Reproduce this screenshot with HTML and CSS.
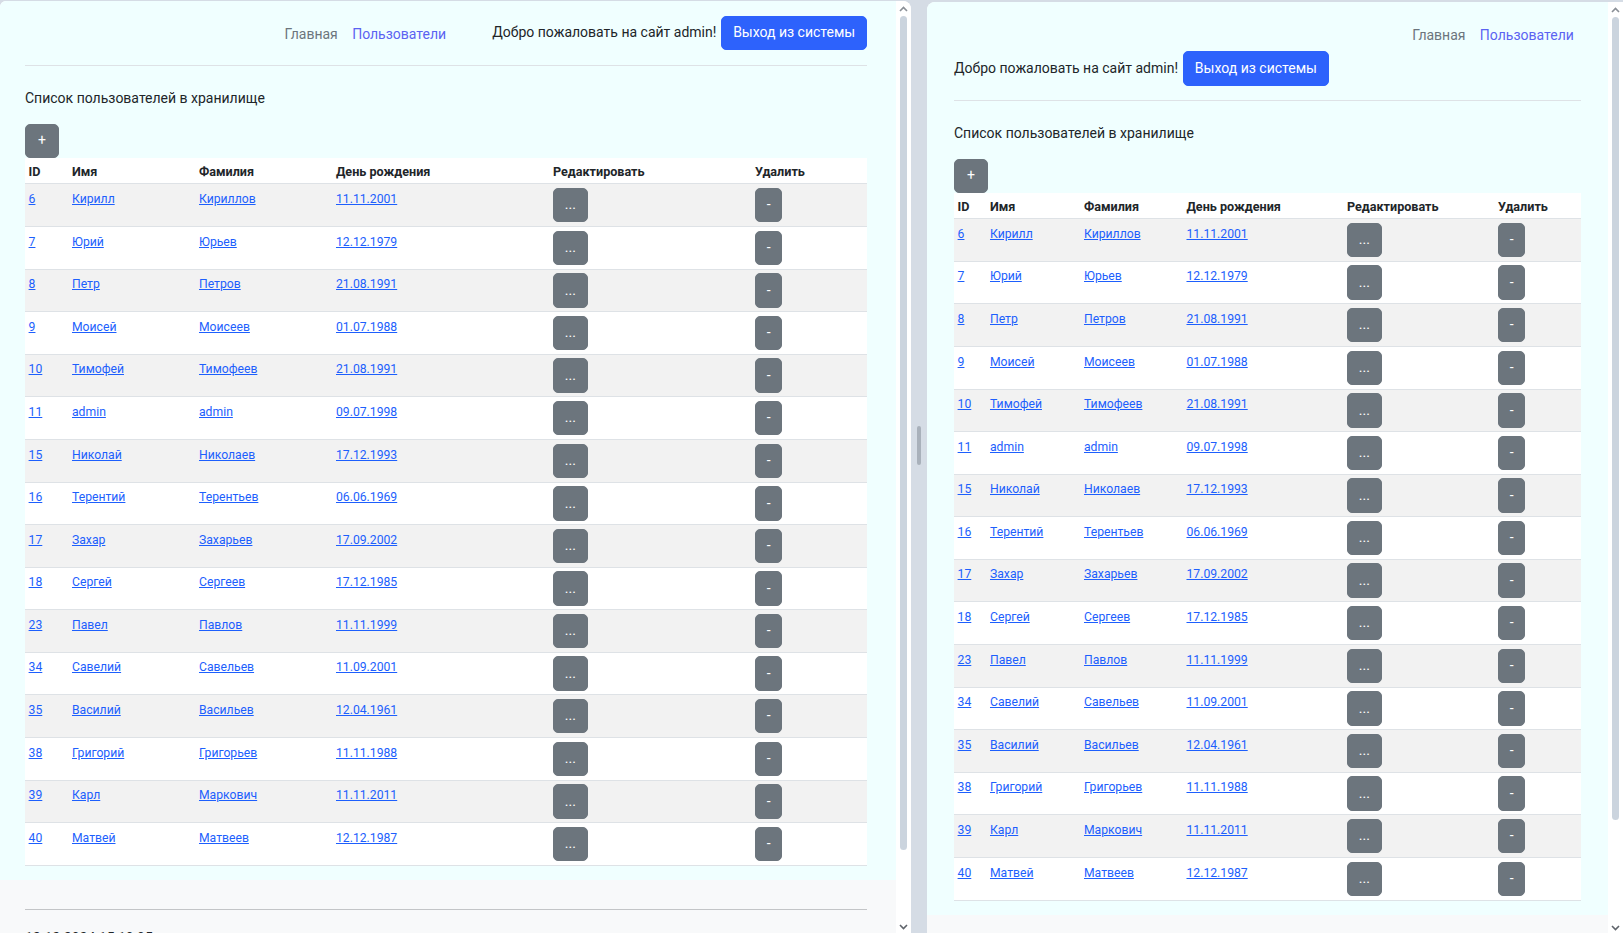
FILE: index.html
```html
<!DOCTYPE html>
<html lang="ru">
<head>
<meta charset="utf-8">
<title>Пользователи</title>
<link rel="stylesheet" href="styles.css">
</head>
<body>
<div class="workspace">
  <section class="pane pane-left">
    <div class="viewport">
      <div class="page">
        <div class="container">
          <header class="hdr hdr-wide">
            <nav class="nav">
              <a class="nav-link muted" href="#">Главная</a>
              <a class="nav-link current" href="#">Пользователи</a>
            </nav>
            <div class="welcome">
              <span>Добро пожаловать на сайт admin!</span>
              <button class="btn btn-primary">Выход из системы</button>
            </div>
          </header>
          <p class="caption">Список пользователей в хранилище</p>
          <button class="btn btn-secondary btn-add">+</button>
          <table class="table table-wide">
            <colgroup><col class="c-id"><col class="c-name"><col class="c-last"><col class="c-bd"><col class="c-edit"><col class="c-del"></colgroup>
            <thead><tr><th>ID</th><th>Имя</th><th>Фамилия</th><th>День рождения</th><th>Редактировать</th><th>Удалить</th></tr></thead>
            <tbody>
              <tr><td><a href="#">6</a></td><td><a href="#">Кирилл</a></td><td><a href="#">Кириллов</a></td><td><a href="#">11.11.2001</a></td><td><button class="btn btn-secondary">...</button></td><td><button class="btn btn-secondary">-</button></td></tr>
              <tr><td><a href="#">7</a></td><td><a href="#">Юрий</a></td><td><a href="#">Юрьев</a></td><td><a href="#">12.12.1979</a></td><td><button class="btn btn-secondary">...</button></td><td><button class="btn btn-secondary">-</button></td></tr>
              <tr><td><a href="#">8</a></td><td><a href="#">Петр</a></td><td><a href="#">Петров</a></td><td><a href="#">21.08.1991</a></td><td><button class="btn btn-secondary">...</button></td><td><button class="btn btn-secondary">-</button></td></tr>
              <tr><td><a href="#">9</a></td><td><a href="#">Моисей</a></td><td><a href="#">Моисеев</a></td><td><a href="#">01.07.1988</a></td><td><button class="btn btn-secondary">...</button></td><td><button class="btn btn-secondary">-</button></td></tr>
              <tr><td><a href="#">10</a></td><td><a href="#">Тимофей</a></td><td><a href="#">Тимофеев</a></td><td><a href="#">21.08.1991</a></td><td><button class="btn btn-secondary">...</button></td><td><button class="btn btn-secondary">-</button></td></tr>
              <tr><td><a href="#">11</a></td><td><a href="#">admin</a></td><td><a href="#">admin</a></td><td><a href="#">09.07.1998</a></td><td><button class="btn btn-secondary">...</button></td><td><button class="btn btn-secondary">-</button></td></tr>
              <tr><td><a href="#">15</a></td><td><a href="#">Николай</a></td><td><a href="#">Николаев</a></td><td><a href="#">17.12.1993</a></td><td><button class="btn btn-secondary">...</button></td><td><button class="btn btn-secondary">-</button></td></tr>
              <tr><td><a href="#">16</a></td><td><a href="#">Терентий</a></td><td><a href="#">Терентьев</a></td><td><a href="#">06.06.1969</a></td><td><button class="btn btn-secondary">...</button></td><td><button class="btn btn-secondary">-</button></td></tr>
              <tr><td><a href="#">17</a></td><td><a href="#">Захар</a></td><td><a href="#">Захарьев</a></td><td><a href="#">17.09.2002</a></td><td><button class="btn btn-secondary">...</button></td><td><button class="btn btn-secondary">-</button></td></tr>
              <tr><td><a href="#">18</a></td><td><a href="#">Сергей</a></td><td><a href="#">Сергеев</a></td><td><a href="#">17.12.1985</a></td><td><button class="btn btn-secondary">...</button></td><td><button class="btn btn-secondary">-</button></td></tr>
              <tr><td><a href="#">23</a></td><td><a href="#">Павел</a></td><td><a href="#">Павлов</a></td><td><a href="#">11.11.1999</a></td><td><button class="btn btn-secondary">...</button></td><td><button class="btn btn-secondary">-</button></td></tr>
              <tr><td><a href="#">34</a></td><td><a href="#">Савелий</a></td><td><a href="#">Савельев</a></td><td><a href="#">11.09.2001</a></td><td><button class="btn btn-secondary">...</button></td><td><button class="btn btn-secondary">-</button></td></tr>
              <tr><td><a href="#">35</a></td><td><a href="#">Василий</a></td><td><a href="#">Васильев</a></td><td><a href="#">12.04.1961</a></td><td><button class="btn btn-secondary">...</button></td><td><button class="btn btn-secondary">-</button></td></tr>
              <tr><td><a href="#">38</a></td><td><a href="#">Григорий</a></td><td><a href="#">Григорьев</a></td><td><a href="#">11.11.1988</a></td><td><button class="btn btn-secondary">...</button></td><td><button class="btn btn-secondary">-</button></td></tr>
              <tr><td><a href="#">39</a></td><td><a href="#">Карл</a></td><td><a href="#">Маркович</a></td><td><a href="#">11.11.2011</a></td><td><button class="btn btn-secondary">...</button></td><td><button class="btn btn-secondary">-</button></td></tr>
              <tr><td><a href="#">40</a></td><td><a href="#">Матвей</a></td><td><a href="#">Матвеев</a></td><td><a href="#">12.12.1987</a></td><td><button class="btn btn-secondary">...</button></td><td><button class="btn btn-secondary">-</button></td></tr>
            </tbody>
          </table>
        </div>
        <footer class="footer">
          <div class="container">
            <hr class="rule">
            <div class="stamp">12.12.2024 15:10:05</div>
          </div>
        </footer>
      </div>
    </div>
    <div class="scrollbar">
      <svg class="arrow" width="9" height="6" viewBox="0 0 9 6"><polyline points="1,5 4.5,1.5 8,5" fill="none" stroke="#8a8f96" stroke-width="1.6"/></svg>
      <div class="track"><div class="thumb thumb-left"></div></div>
      <svg class="arrow" width="9" height="6" viewBox="0 0 9 6"><polyline points="1,1 4.5,4.5 8,1" fill="none" stroke="#5f646b" stroke-width="1.6"/></svg>
    </div>
  </section>

  <div class="splitter"><div class="grip"></div></div>

  <section class="pane pane-right">
    <div class="viewport">
      <div class="page">
        <div class="container">
          <header class="hdr hdr-narrow">
            <nav class="nav">
              <a class="nav-link muted" href="#">Главная</a>
              <a class="nav-link current" href="#">Пользователи</a>
            </nav>
            <div class="welcome">
              <span>Добро пожаловать на сайт admin!</span>
              <button class="btn btn-primary">Выход из системы</button>
            </div>
          </header>
          <p class="caption">Список пользователей в хранилище</p>
          <button class="btn btn-secondary btn-add">+</button>
          <table class="table table-narrow">
            <colgroup><col class="c-id"><col class="c-name"><col class="c-last"><col class="c-bd"><col class="c-edit"><col class="c-del"></colgroup>
            <thead><tr><th>ID</th><th>Имя</th><th>Фамилия</th><th>День рождения</th><th>Редактировать</th><th>Удалить</th></tr></thead>
            <tbody>
              <tr><td><a href="#">6</a></td><td><a href="#">Кирилл</a></td><td><a href="#">Кириллов</a></td><td><a href="#">11.11.2001</a></td><td><button class="btn btn-secondary">...</button></td><td><button class="btn btn-secondary">-</button></td></tr>
              <tr><td><a href="#">7</a></td><td><a href="#">Юрий</a></td><td><a href="#">Юрьев</a></td><td><a href="#">12.12.1979</a></td><td><button class="btn btn-secondary">...</button></td><td><button class="btn btn-secondary">-</button></td></tr>
              <tr><td><a href="#">8</a></td><td><a href="#">Петр</a></td><td><a href="#">Петров</a></td><td><a href="#">21.08.1991</a></td><td><button class="btn btn-secondary">...</button></td><td><button class="btn btn-secondary">-</button></td></tr>
              <tr><td><a href="#">9</a></td><td><a href="#">Моисей</a></td><td><a href="#">Моисеев</a></td><td><a href="#">01.07.1988</a></td><td><button class="btn btn-secondary">...</button></td><td><button class="btn btn-secondary">-</button></td></tr>
              <tr><td><a href="#">10</a></td><td><a href="#">Тимофей</a></td><td><a href="#">Тимофеев</a></td><td><a href="#">21.08.1991</a></td><td><button class="btn btn-secondary">...</button></td><td><button class="btn btn-secondary">-</button></td></tr>
              <tr><td><a href="#">11</a></td><td><a href="#">admin</a></td><td><a href="#">admin</a></td><td><a href="#">09.07.1998</a></td><td><button class="btn btn-secondary">...</button></td><td><button class="btn btn-secondary">-</button></td></tr>
              <tr><td><a href="#">15</a></td><td><a href="#">Николай</a></td><td><a href="#">Николаев</a></td><td><a href="#">17.12.1993</a></td><td><button class="btn btn-secondary">...</button></td><td><button class="btn btn-secondary">-</button></td></tr>
              <tr><td><a href="#">16</a></td><td><a href="#">Терентий</a></td><td><a href="#">Терентьев</a></td><td><a href="#">06.06.1969</a></td><td><button class="btn btn-secondary">...</button></td><td><button class="btn btn-secondary">-</button></td></tr>
              <tr><td><a href="#">17</a></td><td><a href="#">Захар</a></td><td><a href="#">Захарьев</a></td><td><a href="#">17.09.2002</a></td><td><button class="btn btn-secondary">...</button></td><td><button class="btn btn-secondary">-</button></td></tr>
              <tr><td><a href="#">18</a></td><td><a href="#">Сергей</a></td><td><a href="#">Сергеев</a></td><td><a href="#">17.12.1985</a></td><td><button class="btn btn-secondary">...</button></td><td><button class="btn btn-secondary">-</button></td></tr>
              <tr><td><a href="#">23</a></td><td><a href="#">Павел</a></td><td><a href="#">Павлов</a></td><td><a href="#">11.11.1999</a></td><td><button class="btn btn-secondary">...</button></td><td><button class="btn btn-secondary">-</button></td></tr>
              <tr><td><a href="#">34</a></td><td><a href="#">Савелий</a></td><td><a href="#">Савельев</a></td><td><a href="#">11.09.2001</a></td><td><button class="btn btn-secondary">...</button></td><td><button class="btn btn-secondary">-</button></td></tr>
              <tr><td><a href="#">35</a></td><td><a href="#">Василий</a></td><td><a href="#">Васильев</a></td><td><a href="#">12.04.1961</a></td><td><button class="btn btn-secondary">...</button></td><td><button class="btn btn-secondary">-</button></td></tr>
              <tr><td><a href="#">38</a></td><td><a href="#">Григорий</a></td><td><a href="#">Григорьев</a></td><td><a href="#">11.11.1988</a></td><td><button class="btn btn-secondary">...</button></td><td><button class="btn btn-secondary">-</button></td></tr>
              <tr><td><a href="#">39</a></td><td><a href="#">Карл</a></td><td><a href="#">Маркович</a></td><td><a href="#">11.11.2011</a></td><td><button class="btn btn-secondary">...</button></td><td><button class="btn btn-secondary">-</button></td></tr>
              <tr><td><a href="#">40</a></td><td><a href="#">Матвей</a></td><td><a href="#">Матвеев</a></td><td><a href="#">12.12.1987</a></td><td><button class="btn btn-secondary">...</button></td><td><button class="btn btn-secondary">-</button></td></tr>
            </tbody>
          </table>
        </div>
        <footer class="footer">
          <div class="container">
            <hr class="rule">
            <div class="stamp">12.12.2024 15:10:05</div>
          </div>
        </footer>
      </div>
    </div>
    <div class="scrollbar">
      <svg class="arrow" width="9" height="6" viewBox="0 0 9 6"><polyline points="1,5 4.5,1.5 8,5" fill="none" stroke="#8a8f96" stroke-width="1.6"/></svg>
      <div class="track"><div class="thumb thumb-right"></div></div>
      <svg class="arrow" width="9" height="6" viewBox="0 0 9 6"><polyline points="1,1 4.5,4.5 8,1" fill="none" stroke="#5f646b" stroke-width="1.6"/></svg>
    </div>
  </section>
</div>
</body>
</html>
```

FILE: styles.css
```css
* { box-sizing: border-box; }

html, body {
  margin: 0;
  height: 933px;
  overflow: hidden;
}

body {
  background: #d5dce5;
  font-family: Roboto, "Noto Sans", "DejaVu Sans", sans-serif;
  font-size: 14px;
  line-height: 21.6px;
  color: #212529;
}

.workspace {
  display: flex;
  align-items: flex-start;
  height: 933px;
}

.pane {
  display: flex;
  height: 940px;
  background: #ffffff;
  overflow: hidden;
}

.pane-left {
  width: 911px;
  margin-top: 1px;
  border-radius: 6px 8px 8px 0;
}

.pane-right {
  flex: 1;
  margin-top: 2px;
  border-radius: 8px 0 0 8px;
}

.viewport {
  flex: 1;
  overflow: hidden;
  background: #f8f9fa;
}

.page {
  display: flex;
  flex-direction: column;
  background: #f0ffff;
}

.pane-left .container { width: 842px; margin-left: 25px; }
.pane-right .container { width: 627px; margin-left: 27px; }

.page > .container { padding-bottom: 14.4px; }

/* header */
.hdr {
  display: flex;
  border-bottom: 1px solid #dee2e6;
  margin-bottom: 21.6px;
}

.hdr-wide {
  justify-content: flex-end;
  align-items: center;
  padding: 15px 0 15px;
}

.hdr-wide .nav { margin-right: 39px; padding-top: 3px; }

.hdr-narrow {
  flex-direction: column;
  padding: 14.4px 0 14.4px;
}

.hdr-narrow .nav {
  align-self: flex-end;
  height: 35px;
  align-items: center;
  padding-top: 3px;
}

.nav {
  display: flex;
}

.nav-link {
  padding: 0 7.2px;
  text-decoration: none;
}

.nav-link.muted { color: #6c757d; }
.nav-link.current { color: #5b63f2; }

.welcome {
  display: flex;
  align-items: center;
  gap: 5px;
}

/* buttons */
.btn {
  display: inline-flex;
  align-items: center;
  justify-content: center;
  height: 34.4px;
  padding: 0 10.8px;
  border: 1px solid transparent;
  border-radius: 5px;
  font-family: inherit;
  font-size: 14px;
  line-height: 21.6px;
  color: #ffffff;
  cursor: pointer;
}

.btn-primary {
  background: #2d62fc;
  border-color: #2d62fc;
}

.btn-secondary {
  background: #6c757d;
  border-color: #6c757d;
}

.btn-add {
  display: flex;
  width: 34px;
  padding: 0;
}

.caption {
  margin: 0 0 14.4px;
}

/* table */
.table {
  table-layout: fixed;
  border-collapse: collapse;
  background: #ffffff;
  width: 100%;
  font-size: 12.2px;
}

.table th {
  text-align: left;
  font-weight: 700;
  font-size: 12.6px;
  padding: 4px 3.6px 2px;
  line-height: 19px;
  border-bottom: 1px solid #dee2e6;
  vertical-align: top;
}

.table td {
  padding: 3.6px;
  line-height: 22px;
  border-bottom: 1px solid #dee2e6;
  vertical-align: top;
  height: 42.6px;
}

.table tbody tr:nth-child(odd) td { background: #f2f2f2; }

.table a {
  color: #1d5ffd;
  text-decoration: underline;
}

.table .btn { vertical-align: top; }

.table-wide .c-id { width: 43.4px; }
.table-wide .c-name { width: 127px; }
.table-wide .c-last { width: 137px; }
.table-wide .c-bd { width: 217px; }
.table-wide .c-edit { width: 202px; }
.table-wide .c-del { width: 115.6px; }

.table-narrow .c-id { width: 32.4px; }
.table-narrow .c-name { width: 94px; }
.table-narrow .c-last { width: 102.5px; }
.table-narrow .c-bd { width: 160.5px; }
.table-narrow .c-edit { width: 151px; }
.table-narrow .c-del { width: 86.6px; }

/* footer */
.footer {
  background: #f8f9fa;
  padding-top: 29px;
}

.footer .container { padding-bottom: 20px; }

.rule {
  margin: 0 0 18px;
  border: 0;
  border-top: 1px solid #c3c5c7;
}

.stamp { color: #212529; }

/* scrollbars */
.scrollbar {
  width: 15px;
  flex: none;
  display: flex;
  flex-direction: column;
  align-items: center;
  background: #ffffff;
  padding: 5px 0 0;
  height: 933px;
}

.arrow { flex: none; }

.track {
  flex: 1;
  width: 100%;
  display: flex;
  justify-content: center;
  padding-top: 4px;
}

.thumb {
  width: 7px;
  border-radius: 4px;
  background: #cbd4de;
}

.thumb-left { height: 834px; }
.thumb-right { height: 803px; }

.scrollbar .arrow:last-child { margin-bottom: 4px; }

/* splitter */
.splitter {
  width: 16px;
  flex: none;
  align-self: stretch;
  display: flex;
  align-items: center;
  justify-content: center;
  padding-bottom: 43px;
}

.grip {
  width: 4px;
  height: 39px;
  border-radius: 2px;
  background: #a9b1bb;
}
```
